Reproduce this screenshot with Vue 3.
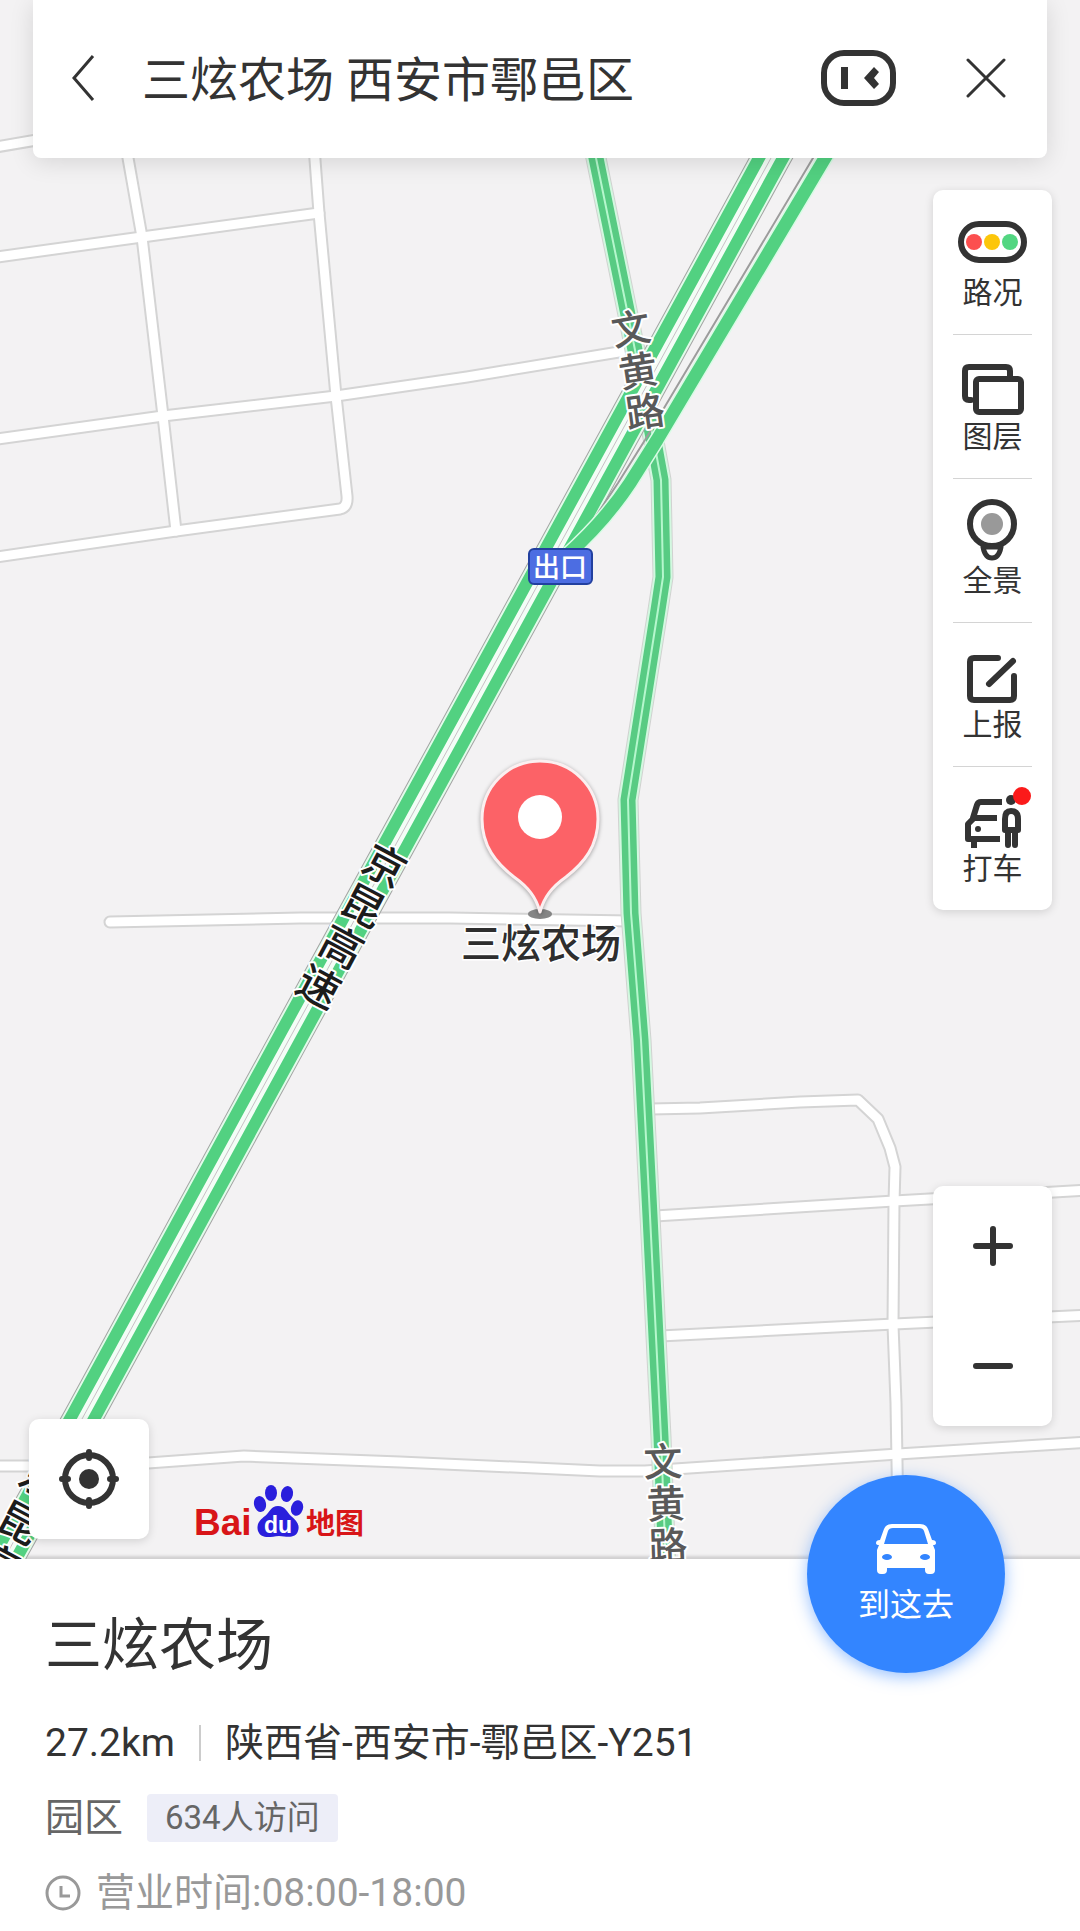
<template>
    <main class="page">
        <section class="map">
            <svg class="map-canvas" viewBox="0 0 1080 1559" preserveAspectRatio="xMidYMid slice" aria-hidden="true">
                <g class="street-casing">
                    <path v-for="(d, i) in streets" :key="i" :d="d" />
                </g>
                <g class="street">
                    <path v-for="(d, i) in streets" :key="i" :d="d" />
                </g>

                <path v-for="layer in ['edge', 'rim', 'fill', 'middle']" :key="layer" :class="['avenue', layer]" :d="avenue" />
                <path v-for="layer in ['edge', 'rim', 'fill', 'gap', 'middle']" :key="layer" :class="['highway', layer]" :d="highway" />
                <path class="ramp edge" d="M836 120 L813 158 L645 440 L618 483 L592 522" />
                <path class="ramp rim" :d="ramp" />
                <path class="ramp fill" :d="ramp" />

                <text
                    v-for="(label, i) in roadLabels"
                    :key="i"
                    :class="['road-label', label.type]"
                    :transform="`translate(${label.x} ${label.y}) rotate(${label.angle})`"
                    y="14"
                >{{ label.text }}</text>

                <rect class="exit-box" x="529" y="549" width="63" height="35" rx="5" />
                <text class="exit-text" x="560" y="577">出口</text>

                <ellipse cx="540" cy="914" rx="12" ry="5" fill="#858585" />
                <path
                    class="pin"
                    d="M540 912 C536 897 528 887 514 877 C496 863 482 846 482 819 A58 58 0 0 1 598 819 C598 846 584 863 566 877 C552 887 544 897 540 912 Z"
                />
                <circle cx="540" cy="817" r="22" fill="#fff" />
                <text class="pin-label" x="541" y="958">三炫农场</text>

                <g class="logo">
                    <text class="logo-latin" x="194" y="1535">Bai</text>
                    <g fill="#2a1fdc">
                        <ellipse cx="260" cy="1504" rx="6" ry="8" transform="rotate(-12 260 1504)" />
                        <ellipse cx="271" cy="1493" rx="6" ry="8" />
                        <ellipse cx="287" cy="1494" rx="6" ry="8" transform="rotate(12 287 1494)" />
                        <ellipse cx="297" cy="1508" rx="6" ry="8" transform="rotate(18 297 1508)" />
                        <path d="M278 1506 C285 1506 287 1512 291 1516 C297 1521 300 1525 298 1531 C296 1538 289 1537 279 1536 C269 1537 261 1539 258 1531 C256 1524 260 1520 265 1516 C270 1512 271 1506 278 1506 Z" />
                    </g>
                    <text class="logo-du" x="278" y="1533">du</text>
                    <text class="logo-cn" x="306" y="1534">地图</text>
                </g>
            </svg>

            <header class="search-bar">
                <button class="icon-button" type="button" aria-label="返回">
                    <svg width="24" height="48" viewBox="0 0 24 48"><path d="M22 2 L3 24 L22 46" fill="none" stroke="#333" stroke-width="3" /></svg>
                </button>
                <input v-model="keyword" class="keyword" type="text" aria-label="搜索地点" />
                <button class="icon-button" type="button" aria-label="语音助手">
                    <svg width="76" height="58" viewBox="0 0 76 58">
                        <rect x="4" y="4" width="69" height="50" rx="20" fill="none" stroke="#333" stroke-width="6" />
                        <path d="M21 18 H28 V40 H21 Z" fill="#333" />
                        <path d="M54 18 L44 29 L54 40 L59 35 L54 29 L59 23 Z" fill="#333" />
                    </svg>
                </button>
                <button class="icon-button close" type="button" aria-label="关闭">
                    <svg width="40" height="40" viewBox="0 0 40 40"><path d="M2 2 L38 38 M38 2 L2 38" fill="none" stroke="#333" stroke-width="3" stroke-linecap="round" /></svg>
                </button>
            </header>

            <nav class="toolbar">
                <button v-for="tool in tools" :key="tool.id" class="tool" type="button">
                    <svg width="72" height="64" viewBox="0 0 72 64" fill="none" stroke="#333" stroke-width="6" stroke-linecap="round" stroke-linejoin="round">
                        <template v-if="tool.id === 'traffic'">
                            <rect x="4" y="14" width="63" height="36" rx="18" />
                            <g stroke="none">
                                <circle cx="17" cy="32" r="8" fill="#fc4f4f" />
                                <circle cx="35" cy="32" r="8" fill="#fcc60a" />
                                <circle cx="53" cy="32" r="8" fill="#52d681" />
                            </g>
                        </template>
                        <template v-else-if="tool.id === 'layers'">
                            <path d="M14 46 H12 Q8 46 8 42 V17 Q8 13 12 13 H49 Q53 13 53 17 V22" />
                            <rect x="19" y="25" width="45" height="33" rx="3" />
                        </template>
                        <template v-else-if="tool.id === 'panorama'">
                            <circle cx="35" cy="26" r="22" />
                            <circle cx="35" cy="26" r="11" fill="#999" stroke="none" />
                            <path d="M26 49 Q28 60 35 60 Q42 60 44 49 Z" stroke-width="5" />
                        </template>
                        <template v-else-if="tool.id === 'report'">
                            <path d="M41 16 H17 Q13 16 13 20 V54 Q13 58 17 58 H53 Q57 58 57 54 V34" />
                            <path d="M32 42 L56 19" />
                        </template>
                        <template v-else>
                            <path d="M42 16 H24 Q21 16 20 19 L16 32 H37 M16 33 L11 38 V53 H40 M17 54 V59" stroke-linecap="square" />
                            <circle cx="21" cy="43" r="3" fill="#333" stroke="none" />
                            <circle cx="54" cy="14" r="5" fill="#333" stroke="none" />
                            <path d="M48 44 V33 Q48 25 54 25 Q61 25 61 33 V44 H48 M51 45 V59 M58 45 V59" />
                            <circle cx="65" cy="10" r="9" fill="#fb1a1a" stroke="none" />
                        </template>
                    </svg>
                    <span>{{ tool.name }}</span>
                </button>
            </nav>

            <div class="zoom">
                <button type="button" aria-label="放大">
                    <svg width="40" height="40" viewBox="0 0 40 40"><path d="M3 20 H37 M20 3 V37" stroke="#333" stroke-width="6" stroke-linecap="round" /></svg>
                </button>
                <button type="button" aria-label="缩小">
                    <svg width="40" height="40" viewBox="0 0 40 40"><path d="M3 20 H37" stroke="#333" stroke-width="6" stroke-linecap="round" /></svg>
                </button>
            </div>

            <button class="locate" type="button" aria-label="定位">
                <svg width="60" height="60" viewBox="0 0 60 60" fill="none" stroke="#333" stroke-width="6" stroke-linecap="round">
                    <circle cx="30" cy="30" r="24" />
                    <circle cx="30" cy="30" r="10" fill="#333" stroke="none" />
                    <path d="M30 3 V9 M30 51 V57 M3 30 H9 M51 30 H57" />
                </svg>
            </button>
        </section>

        <section class="sheet">
            <h1>{{ place.name }}</h1>
            <p class="row address">
                <span>{{ place.distance }}</span>
                <i class="divider"></i>
                <span>{{ place.address }}</span>
            </p>
            <p class="row category">
                <span>{{ place.category }}</span>
                <span class="visits">{{ place.visits }}</span>
            </p>
            <p class="row hours">
                <svg width="36" height="36" viewBox="0 0 36 36" fill="none" stroke="#999" stroke-width="3">
                    <circle cx="18" cy="18" r="16" />
                    <path d="M16 11 V21 H25" />
                </svg>
                <span>营业时间:{{ place.hours }}</span>
            </p>
            <button class="go" type="button">
                <svg width="62" height="52" viewBox="0 0 62 52">
                    <path
                        fill="#fff"
                        fill-rule="evenodd"
                        d="M17 1 H45 Q51 1 53 6 L57 17 Q61 17 61 20 Q61 22 58 22 L60 27 V47 Q60 51 56 51 H54 Q50 51 50 47 V45 H12 V47 Q12 51 8 51 H6 Q2 51 2 47 V27 L4 22 Q1 22 1 20 Q1 17 5 17 L9 6 Q11 1 17 1 Z M18 5 Q14 5 13 8 L9 21 H53 L49 8 Q48 5 44 5 Z M12 31 A5 3 0 0 0 12 37 A5 3 0 0 0 12 31 Z M50 31 A5 3 0 0 0 50 37 A5 3 0 0 0 50 31 Z"
                    />
                </svg>
                <span>到这去</span>
            </button>
        </section>
    </main>
</template>

<script setup>
import { ref } from 'vue';

const keyword = ref('三炫农场 西安市鄠邑区');

const place = ref({
    name: '三炫农场',
    distance: '27.2km',
    address: '陕西省-西安市-鄠邑区-Y251',
    category: '园区',
    visits: '634人访问',
    hours: '08:00-18:00',
});

const tools = [
    { id: 'traffic', name: '路况' },
    { id: 'layers', name: '图层' },
    { id: 'panorama', name: '全景' },
    { id: 'report', name: '上报' },
    { id: 'taxi', name: '打车' },
];

const streets = [
    'M-10 148 L60 136',
    'M-10 258 L142 237 L319 213',
    'M122 120 L128 158 L142 237 L163 416 L176 531',
    'M312 120 L319 213 L336 396 L347 496 Q348 507 340 509 L176 531 L-10 558',
    'M-10 440 L163 416 L336 396 L467 377 L625 351',
    'M110 922 L300 918 L450 918 L630 921',
    'M650 1109 L700 1108 L800 1102 L858 1100 L878 1119 L890 1148 L895 1167 L894 1202 L893 1325 L896 1403 L898 1520',
    'M655 1216 L894 1201 L1090 1190',
    'M660 1336 L894 1324 L1090 1315',
    'M-10 1466 L60 1466 L148 1463 L244 1456 L400 1462 L600 1471 L645 1471 L898 1454 L1090 1442',
];

const avenue = 'M588 120 L596 158 L627 310 L640 375 L655 447 L661 480 L663 577 L658 610 L628 800 L631 913 L641 1040 L650 1216 L661 1437 L666 1570';
const highway = 'M792 120 L771 158 L453 740 L292 1034 L82 1419 L-10 1584';
const ramp = 'M848 120 L825 158 L657 440 L630 483 Q605 521 566 556';

const roadLabels = [
    { text: '文', x: 631, y: 329, angle: -10, type: 'minor' },
    { text: '黄', x: 638, y: 371, angle: -9, type: 'minor' },
    { text: '路', x: 645, y: 412, angle: -8, type: 'minor' },
    { text: '京', x: 384, y: 867, angle: 28, type: 'major' },
    { text: '昆', x: 362, y: 907, angle: 28, type: 'major' },
    { text: '高', x: 341, y: 948, angle: 28, type: 'major' },
    { text: '速', x: 318, y: 988, angle: 28, type: 'major' },
    { text: '京', x: 41, y: 1480, angle: 28, type: 'major' },
    { text: '昆', x: 18, y: 1524, angle: 28, type: 'major' },
    { text: '高', x: -3, y: 1565, angle: 28, type: 'major' },
    { text: '文', x: 663, y: 1462, angle: -2, type: 'minor' },
    { text: '黄', x: 666, y: 1504, angle: -2, type: 'minor' },
    { text: '路', x: 668, y: 1546, angle: -2, type: 'minor' },
];
</script>

<style>
body {
    margin: 0;
}
</style>

<style scoped>
.page {
    display: flex;
    flex-direction: column;
    min-height: 100vh;
    background: #fff;
    color: #333;
    font-family: Roboto, "Noto Sans CJK SC", sans-serif;
}

button {
    display: flex;
    align-items: center;
    justify-content: center;
    padding: 0;
    border: 0;
    background: none;
    color: inherit;
    font: inherit;
    cursor: pointer;
}

/* map */
.map {
    position: relative;
    flex: 1;
    min-height: 1200px;
    overflow: hidden;
    background: #f3f2f3;
    box-shadow: inset 0 -6px 3px -3px rgba(0, 0, 0, 0.14);
}

.map-canvas {
    position: absolute;
    inset: 0;
    width: 100%;
    height: 100%;
}

.map-canvas path {
    fill: none;
    stroke-linejoin: round;
}

.street-casing path {
    stroke: #d4d4d4;
    stroke-width: 13px;
    stroke-linecap: round;
}

.street path {
    stroke: #fff;
    stroke-width: 9px;
    stroke-linecap: round;
}

.avenue.edge {
    stroke: #d0d2d0;
    stroke-width: 21px;
}

.avenue.rim {
    stroke: #d3f8e0;
    stroke-width: 19px;
}

.avenue.fill {
    stroke: #58cb83;
    stroke-width: 15px;
}

.avenue.middle {
    stroke: #b5f7cd;
    stroke-width: 2px;
}

.highway.edge {
    stroke: #a3a3a3;
    stroke-width: 39px;
}

.highway.rim {
    stroke: #e2fbea;
    stroke-width: 37px;
}

.highway.fill {
    stroke: #52d181;
    stroke-width: 33px;
}

.highway.gap {
    stroke: #f3fdf6;
    stroke-width: 9px;
}

.highway.middle {
    stroke: #c9bfc6;
    stroke-width: 1px;
}

.ramp.edge {
    stroke: #9c9c9c;
    stroke-width: 2px;
}

.ramp.rim {
    stroke: #d9fbe5;
    stroke-width: 16px;
}

.ramp.fill {
    stroke: #52d181;
    stroke-width: 13px;
}

.road-label {
    font-weight: 500;
    text-anchor: middle;
    stroke: #fff;
    stroke-width: 4px;
    stroke-linejoin: round;
    paint-order: stroke;
}

.road-label.minor {
    fill: #595959;
    font-size: 39px;
}

.road-label.major {
    fill: #1c1c1c;
    font-size: 42px;
}

.exit-box {
    fill: #4c6de2;
    stroke: #22409f;
    stroke-width: 2px;
}

.exit-text {
    fill: #fff;
    font-size: 27px;
    font-weight: 500;
    text-anchor: middle;
}

.map-canvas .pin {
    fill: #fc6267;
    stroke: #fbeff0;
    stroke-width: 3px;
    filter: drop-shadow(0 1px 2px rgba(0, 0, 0, 0.35));
}

.pin-label {
    fill: #2e2e2e;
    font-size: 40px;
    font-weight: 500;
    text-anchor: middle;
    stroke: #fff;
    stroke-width: 3px;
    paint-order: stroke;
}

.map-canvas .logo path {
    fill: #2a1fdc;
}

.logo-latin {
    fill: #d81518;
    font-family: "Liberation Sans", sans-serif;
    font-size: 37px;
    font-weight: 700;
}

.logo-du {
    fill: #fff;
    font-family: "Liberation Sans", sans-serif;
    font-size: 23px;
    font-weight: 700;
    text-anchor: middle;
}

.logo-cn {
    fill: #d81518;
    font-size: 29px;
    font-weight: 700;
}

/* controls over the map */
.search-bar {
    position: relative;
    display: flex;
    align-items: center;
    height: 158px;
    margin: 0 33px;
    padding: 0 41px 2px 38px;
    box-sizing: border-box;
    border-radius: 0 0 8px 8px;
    background: #fff;
    box-shadow: 0 4px 24px rgba(0, 0, 0, 0.12);
}

.keyword {
    flex: 1;
    min-width: 0;
    margin-left: 47px;
    padding: 6px 0 0;
    border: 0;
    outline: none;
    background: none;
    color: #333;
    font: inherit;
    font-size: 48px;
    line-height: 64px;
}

.close {
    margin-left: 70px;
}

.toolbar,
.zoom,
.locate {
    position: absolute;
    border-radius: 10px;
    background: #fff;
    box-shadow: 0 2px 10px rgba(0, 0, 0, 0.14);
}

.toolbar {
    top: 190px;
    right: 28px;
    width: 119px;
}

.tool {
    position: relative;
    flex-direction: column;
    justify-content: flex-start;
    width: 100%;
    height: 144px;
    padding-top: 20px;
    font-size: 30px;
    line-height: 38px;
}

.tool svg {
    overflow: visible;
}

.tool + .tool::before {
    content: "";
    position: absolute;
    top: 0;
    left: 20px;
    right: 20px;
    height: 1px;
    background: #d4d4d4;
}

.zoom {
    right: 28px;
    bottom: 133px;
    width: 119px;
}

.zoom button {
    width: 100%;
    height: 120px;
}

.locate {
    left: 29px;
    bottom: 20px;
    width: 120px;
    height: 120px;
}

/* place card */
.sheet {
    position: relative;
    padding: 55px 45px 14px;
    background: #fff;
}

h1 {
    margin: 0 0 41px;
    font-size: 57px;
    font-weight: 400;
    line-height: 64px;
}

.row {
    display: flex;
    align-items: center;
    margin: 0 0 27px;
    font-size: 39px;
    line-height: 48px;
}

.divider {
    width: 2px;
    height: 36px;
    margin: 0 24px;
    background: #ccc;
}

.category {
    gap: 24px;
    color: #666;
}

.visits {
    padding: 0 18px;
    border-radius: 4px;
    background: #edeef8;
    font-size: 33px;
}

.hours {
    gap: 15px;
    margin: 0;
    color: #999;
}

.go {
    position: absolute;
    top: -84px;
    right: 75px;
    flex-direction: column;
    gap: 10px;
    width: 198px;
    height: 198px;
    border-radius: 50%;
    background: #3385ff;
    box-shadow: 0 4px 16px rgba(51, 133, 255, 0.5);
    color: #fff;
    font-size: 32px;
    line-height: 40px;
}
</style>
